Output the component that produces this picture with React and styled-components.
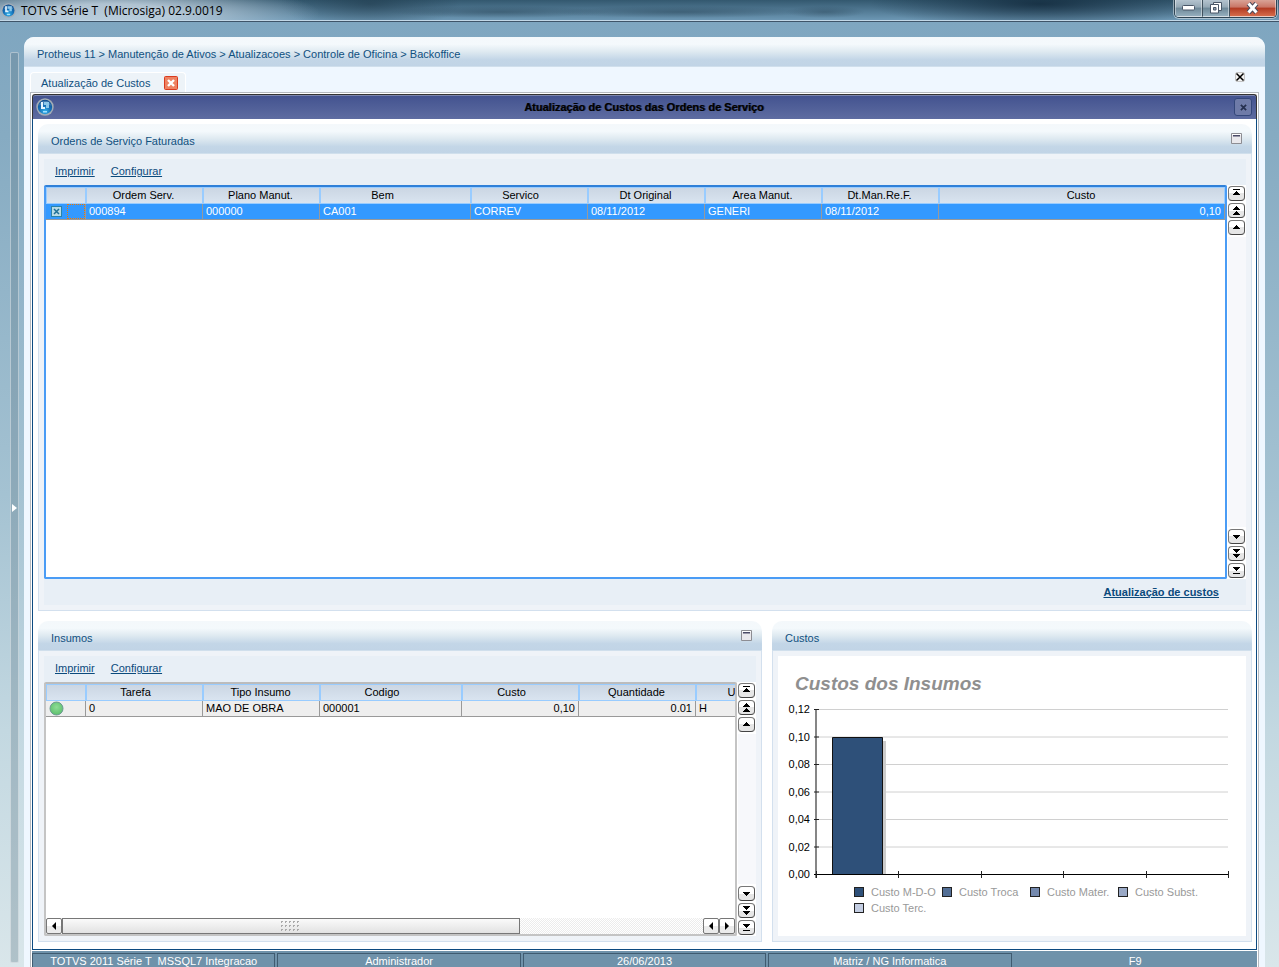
import React from "react";
import styled, { createGlobalStyle, css } from "styled-components";

const GlobalStyle = createGlobalStyle`
  *, *::before, *::after { box-sizing: border-box; }
  body {
    margin: 0;
    font: 11px/14px "Liberation Sans", Arial, sans-serif;
    color: #000;
    background: #d5e3ea;
  }
  button { font: inherit; padding: 0; margin: 0; }
`;

const Page = styled.div`
  min-height: 100vh;
  display: flex;
  flex-direction: column;
`;

/* ---------- operating system title bar ---------- */

const SystemBar = styled.header`
  height: 22px;
  flex: none;
  display: flex;
  align-items: flex-start;
  padding: 0 2px 0 1px;
  border-bottom: 1px solid #3f5468;
  box-shadow: inset 0 -1px 0 #c3d7e6;
  background:
    radial-gradient(ellipse 210px 30px at 110px 13px, rgba(204, 218, 230, 0.8) 30%, rgba(204, 218, 230, 0) 100%),
    radial-gradient(ellipse 110px 6px at 500px 12px, rgba(36, 62, 80, 0.45), transparent),
    radial-gradient(ellipse 130px 6px at 680px 12px, rgba(36, 62, 80, 0.45), transparent),
    radial-gradient(ellipse 40px 6px at 825px 12px, rgba(36, 62, 80, 0.4), transparent),
    radial-gradient(ellipse 90px 26px at 370px 4px, rgba(24, 48, 64, 0.5), transparent),
    radial-gradient(ellipse 170px 24px at 1040px 4px, rgba(12, 34, 52, 0.75), transparent),
    linear-gradient(#33586f, #6f9ab7);
`;

const SystemTitle = styled.h1`
  flex: 1;
  margin: 0 0 0 4px;
  font: 12px/21px "Open Sans", "Noto Sans", sans-serif;
  white-space: pre;
  color: #000;
`;

const WindowButtons = styled.div`
  display: flex;
  height: 18px;
  border: 1px solid #2f4453;
  border-top: 0;
  border-radius: 0 0 5px 5px;
  overflow: hidden;
  box-shadow: 0 0 0 1px rgba(255, 255, 255, 0.45);
`;

const WindowButton = styled.button`
  width: ${(p) => (p.$danger ? 47 : 27)}px;
  height: 17px;
  display: grid;
  place-items: center;
  border: 1px solid rgba(255, 255, 255, 0.45);
  border-top: 0;
  background: ${(p) =>
    p.$danger
      ? "linear-gradient(#d9a396 0, #c97565 45%, #b13a22 50%, #d56b4a 100%)"
      : "linear-gradient(#b4c3ce 0, #94a8b5 45%, #6d8797 50%, #94aebd 100%)"};
  & + & { border-left: 1px solid #40515e; }
`;

/* ---------- application shell ---------- */

const Workspace = styled.div`
  flex: 1;
  display: flex;
  gap: 5px;
  padding: 15px 14px 0 10px;
  background: linear-gradient(#7fa6c0 0, #86abc2 12%, #a4c2d2 50%, #c3d8e1 75%, #d9e6ea 100%);
`;

const Rail = styled.button`
  width: 9px;
  flex: none;
  margin: 15px 0 4px;
  display: grid;
  place-items: center;
  border: 1px solid rgba(255, 255, 255, 0.4);
  border-radius: 2px;
  background: rgba(100, 125, 140, 0.35);
`;

const Shell = styled.main`
  flex: 1;
  min-width: 0;
  display: flex;
  flex-direction: column;
  border-radius: 10px 10px 0 0;
  overflow: hidden;
  background: #eff7ff;
`;

const barGradient = css`
  background: linear-gradient(#f4f8fb 0, #f4f9fc 25%, #dfeaf1 50%, #c3d6e7 78%, #c1d4e6 100%);
  border-bottom: 1px solid #d0dfec;
`;

const Breadcrumb = styled.nav`
  height: 30px;
  flex: none;
  padding: 10px 13px 0;
  color: #10507f;
  white-space: nowrap;
  ${barGradient}
`;

const TabStrip = styled.div`
  height: 25px;
  flex: none;
  display: flex;
  justify-content: space-between;
  align-items: flex-start;
  padding: 5px 20px 0 6px;
`;

const Tab = styled.div`
  height: 21px;
  display: flex;
  align-items: center;
  gap: 14px;
  padding: 0 7px 0 10px;
  border: 1px solid #fff;
  border-bottom: 0;
  border-radius: 4px 4px 0 0;
  background: #edf3f8;
  color: #10507f;
`;

const IconButton = styled.button`
  display: grid;
  place-items: center;
  border: 0;
  background: none;
`;

const Frame = styled.div`
  flex: 1;
  display: flex;
  flex-direction: column;
  margin: 0 6px;
  padding: 1px 1px 0;
  border: 1px solid #b4b9bf;
  border-bottom: 0;
  background: #fff;
`;

const DialogBar = styled.header`
  height: 25px;
  flex: none;
  display: grid;
  grid-template-columns: 24px 1fr 24px;
  align-items: center;
  padding: 0 4px 0 3px;
  border: 1px solid #333;
  border-bottom: 0;
  border-radius: 3px 3px 0 0;
  box-shadow: inset 0 1px 0 #7c86ad;
  background: linear-gradient(#42528f, #5e6ca1);
`;

const DialogTitle = styled.h2`
  margin: 0;
  font-size: 11px;
  line-height: 14px;
  font-weight: bold;
  text-align: center;
  text-shadow: 1px 0 0 rgba(0, 0, 0, 0.55);
`;

const DialogClose = styled.button`
  width: 18px;
  height: 18px;
  display: grid;
  place-items: center;
  justify-self: end;
  border: 1px solid #34477a;
  border-radius: 3px;
  background: #6f7ba8;
`;

const DialogBody = styled.div`
  flex: 1;
  display: grid;
  grid-template-rows: 487fr 321fr;
  gap: 10px;
  padding: 5px 4px 7px 5px;
  border: 1px solid #0d4a80;
  border-top: 0;
`;

const LowerRow = styled.div`
  display: grid;
  grid-template-columns: minmax(0, 181fr) minmax(0, 120fr);
  gap: 10px;
`;

/* ---------- panels ---------- */

const PanelBox = styled.section`
  min-width: 0;
  display: flex;
  flex-direction: column;
`;

const PanelHead = styled.header`
  height: 30px;
  flex: none;
  display: flex;
  justify-content: space-between;
  align-items: center;
  padding: 0 10px 0 13px;
  border-radius: 10px 10px 0 0;
  color: #10507f;
  ${barGradient}
`;

const PanelTitle = styled.h3`
  margin: 0;
  padding-top: 4px;
  font-size: 11px;
  line-height: 14px;
  font-weight: normal;
`;

const PanelBody = styled.div`
  flex: 1;
  display: flex;
  flex-direction: column;
  padding: 5px;
  border: 1px solid #d3e0ee;
  border-top: 0;
  background: #eff3f8;
`;

const Toolbar = styled.div`
  height: 26px;
  flex: none;
  display: flex;
  align-items: center;
  justify-content: ${(p) => (p.$end ? "flex-end" : "flex-start")};
  gap: 16px;
  padding: 0 27px ${(p) => (p.$end ? 0 : 2)}px 11px;
  background: #e8eff6;
`;

const ActionLink = styled.a`
  color: #0b4a7c;
  text-decoration: underline;
  font-weight: ${(p) => (p.$strong ? "bold" : "normal")};
`;

/* ---------- data grid ---------- */

const GridArea = styled.div`
  flex: 1;
  display: flex;
  gap: 1px;
  background: #fff;
`;

const GridBox = styled.div`
  flex: 1;
  min-width: 0;
  display: flex;
  flex-direction: column;
  justify-content: space-between;
  overflow: hidden;
  border: ${(p) => (p.$active ? "2px solid #4a9cf5" : "2px solid #c4c4c4")};
  border-top-color: ${(p) => (p.$active ? "#2f80d8" : "#bcbcbc")};
  border-radius: 2px;
  background: #fff;
`;

const Table = styled.table`
  width: ${(p) => (p.$wide ? "766px" : "100%")};
  table-layout: fixed;
  border-collapse: separate;
  border-spacing: 0;
`;

const HeadCell = styled.th`
  height: 17px;
  padding: 0 ${(p) => p.$reserve || 2}px 0 0;
  border: 1px solid #99ccff;
  font-weight: normal;
  line-height: 14px;
  vertical-align: top;
  white-space: nowrap;
  overflow: hidden;
  background: linear-gradient(#cbd6e3, #d9e4f0);
`;

const Cell = styled.td`
  height: 16px;
  padding: 0 3px;
  border-right: 1px solid #999;
  border-bottom: 1px solid #999;
  line-height: 14px;
  vertical-align: top;
  white-space: nowrap;
  text-align: ${(p) => (p.$right ? "right" : "left")};
  color: ${(p) => (p.$active ? "#fff" : "#000")};
  background: ${(p) => (p.$active ? "#3399ff" : "#eee")};
`;

const MarkerCell = styled(Cell)`
  padding: 0 0 0 ${(p) => (p.$active ? 5 : 3)}px;
`;

const Marker = styled.div`
  display: flex;
  align-items: center;
  justify-content: space-between;
`;

const CheckLabel = styled.label`
  display: grid;
  width: 11px;
  height: 11px;
  & > * { grid-area: 1 / 1; }
`;

const Check = styled.input`
  appearance: none;
  margin: 0;
  width: 11px;
  height: 11px;
  border: 1px solid #2a83a8;
  background: #b9dbe6;
`;

const FocusCell = styled.span`
  width: 18px;
  height: 15px;
  border: 1px dotted #f07800;
`;

const ScrollColumn = styled.div`
  width: 18px;
  flex: none;
  display: flex;
  flex-direction: column;
  justify-content: space-between;
  padding: 1px 1px 1px 0;
  background: linear-gradient(#fff 52px, #f7f8fb 52px, #f7f8fb calc(100% - 52px), #fff calc(100% - 52px));
`;

const ScrollGroup = styled.div`
  display: flex;
  flex-direction: column;
  gap: 2px;
`;

const ScrollButton = styled.button`
  width: 17px;
  height: 15px;
  display: grid;
  place-items: center;
  border: 1px solid #777;
  border-bottom-color: #444;
  border-right-color: #555;
  border-radius: 4px;
  background: linear-gradient(#fff 50%, #e6e6e6 50%);
`;

const HScroll = styled.div`
  height: 16px;
  display: flex;
  background: repeating-conic-gradient(#ececec 0 25%, #fff 0 50%) 0 0 / 2px 2px;
`;

const HButton = styled.button`
  width: 16px;
  flex: none;
  display: grid;
  place-items: center;
  border: 1px solid #777;
  border-radius: 2px;
  background: linear-gradient(#fff 50%, #ebebeb 50%);
`;

const HThumb = styled.div`
  flex: 457;
  display: grid;
  place-items: center;
  border: 1px solid #777;
  background: linear-gradient(#fafafa, #e2e2e2);
`;

const HTrack = styled.div`
  flex: 184;
`;

/* ---------- chart ---------- */

const ChartCard = styled.figure`
  flex: 1;
  margin: 0;
  padding: 15px 10px 0;
  background: #fff;
`;

const ChartTitle = styled.figcaption`
  padding-left: 7px;
  font: italic bold 19px/26px "Liberation Sans", Arial, sans-serif;
  color: #8f8f8f;
`;

const Plot = styled.svg`
  display: block;
  width: 100%;
  margin-top: 6px;
  font: 11px "Liberation Sans", Arial, sans-serif;
`;

const Legend = styled.ul`
  display: grid;
  grid-template-columns: repeat(4, 88px);
  margin: 0;
  padding: 3px 0 0 66px;
  list-style: none;
  color: #999;
`;

const LegendItem = styled.li`
  display: flex;
  align-items: center;
  gap: 7px;
  height: 16px;
  white-space: nowrap;
  &::before {
    content: "";
    width: 10px;
    height: 10px;
    flex: none;
    border: 1px solid #222;
    background: ${(p) => p.$color};
  }
`;

/* ---------- status bar ---------- */

const StatusBar = styled.footer`
  height: 17px;
  flex: none;
  display: grid;
  grid-template-columns: repeat(5, 1fr);
  gap: 2px;
  padding-top: 2px;
  border-top: 1px solid #fff;
  background: #6f92aa;
`;

const StatusCell = styled.span`
  padding-top: ${(p) => (p.$plain ? 1 : 0)}px;
  border: ${(p) => (p.$plain ? "0" : "1px solid #3f5b70")};
  border-bottom: 0;
  line-height: 14px;
  text-align: center;
  white-space: pre;
  color: #fff;
`;

/* ---------- icons ---------- */

const Orb = ({ size }) => (
  <svg width={size} height={size} viewBox="0 0 18 18" aria-hidden="true">
    <defs>
      <radialGradient id={`orb${size}`} cx="50%" cy="80%" r="80%">
        <stop offset="0" stopColor="#35b3ea" />
        <stop offset="0.5" stopColor="#1570b8" />
        <stop offset="1" stopColor="#0b4a8c" />
      </radialGradient>
    </defs>
    <circle cx="9" cy="9" r="8.7" fill="#a3adb6" />
    <circle cx="9" cy="9" r="7.2" fill={`url(#orb${size})`} />
    <path d="M3 7.500a6.200 6.200 0 0 1 12 0q-6-2-12 0z" fill="#fff" opacity="0.2" />
    <path d="M5 4h2v5h2v2H5z" fill="#e4f5ff" />
    <path d="M8 4h5v6h-3V7H8z" fill="#8cc8ea" />
    <path d="M7 13h4v1.500H7z" fill="#9fe0ff" />
  </svg>
);

const Cross = ({ size = 8, color = "#000", width = 2 }) => (
  <svg width={size} height={size} viewBox="0 0 8 8" aria-hidden="true">
    <path d="M1 1l6 6M7 1l-6 6" stroke={color} strokeWidth={width} />
  </svg>
);

const TabClose = () => (
  <svg width="14" height="14" viewBox="0 0 14 14" aria-hidden="true">
    <rect x="0.5" y="0.5" width="13" height="13" rx="1" fill="#ee8262" stroke="#d93b1f" />
    <path d="M4 4l6 6M10 4l-6 6" stroke="#fff" strokeWidth="2.4" />
  </svg>
);

const StripClose = () => (
  <svg width="10" height="10" viewBox="0 0 10 10" aria-hidden="true">
    <rect x="0.5" y="0.5" width="9" height="9" rx="1.5" fill="#f2f2f2" stroke="#c4c4c4" />
    <path d="M1.5 1.5l7 7M8.5 1.5l-7 7" stroke="#000" strokeWidth="1.5" />
  </svg>
);

const CollapseIcon = () => (
  <svg width="11" height="11" viewBox="0 0 11 11" aria-hidden="true">
    <path d="M.5.5h10v10H.5z" fill="#e9e8ec" stroke="#8d8d93" />
    <path d="M1 1h9v1H1z" fill="#fff" />
    <path d="M2 2h7v1.5H2z" fill="#4a4a66" />
  </svg>
);

const arrows = {
  first: "M2 0h7v1H2zM5 2h1v1h1v1h1v1h1v1H2V5h1V4h1V3h1z",
  pageUp: "M5 0h1v1h1v1h1v1h1v1H2V3h1V2h1V1h1zM5 5h1v1h1v1h1v1h1v1H2V8h1V7h1V6h1z",
  up: "M5 2h1v1h1v1h1v1h1v1H2V5h1V4h1V3h1z",
  down: "M2 3h7v1H8v1H7v1H6v1H5V6H4V5H3V4H2z",
  pageDown: "M2 0h7v1H8v1H7v1H6v1H5V3H4V2H3V1H2zM2 5h7v1H8v1H7v1H6v1H5V8H4V7H3V6H2z",
  last: "M2 1h7v1H8v1H7v1H6v1H5V4H4V3H3V2H2zM2 7h7v1H2z",
};

const ArrowIcon = ({ kind }) => (
  <svg width="11" height="9" viewBox="0 0 11 9" aria-hidden="true">
    <path d={arrows[kind]} />
  </svg>
);

const SideArrow = ({ left }) => (
  <svg width="6" height="8" viewBox="0 0 6 8" aria-hidden="true">
    <path d={left ? "M5 0v8L1 4z" : "M1 0v8l4-4z"} />
  </svg>
);

const Grip = () => (
  <svg width="19" height="11" viewBox="0 0 19 11" aria-hidden="true">
    {[0, 4, 8].map((y) =>
      [0, 4, 8, 12, 16].map((x) => (
        <path key={`${x}-${y}`} d={`M${x} ${y}h2v1h-1v1h-1z`} fill="#aaa" />
      ))
    )}
  </svg>
);

/* ---------- composed parts ---------- */

const scrollLabels = {
  first: "Primeiro",
  pageUp: "Página anterior",
  up: "Linha anterior",
  down: "Próxima linha",
  pageDown: "Próxima página",
  last: "Último",
};

const Scroller = () => (
  <ScrollColumn>
    {[["first", "pageUp", "up"], ["down", "pageDown", "last"]].map((group) => (
      <ScrollGroup key={group[0]}>
        {group.map((kind) => (
          <ScrollButton key={kind} type="button" aria-label={scrollLabels[kind]}>
            <ArrowIcon kind={kind} />
          </ScrollButton>
        ))}
      </ScrollGroup>
    ))}
  </ScrollColumn>
);

const Panel = ({ title, collapsible, children }) => (
  <PanelBox>
    <PanelHead>
      <PanelTitle>{title}</PanelTitle>
      {collapsible && (
        <IconButton type="button" aria-label={`Recolher ${title}`}>
          <CollapseIcon />
        </IconButton>
      )}
    </PanelHead>
    <PanelBody>{children}</PanelBody>
  </PanelBox>
);

const GridToolbar = () => (
  <Toolbar>
    <ActionLink href="#imprimir">Imprimir</ActionLink>
    <ActionLink href="#configurar">Configurar</ActionLink>
  </Toolbar>
);

const DataTable = ({ columns, row, active, wide, marker }) => (
  <Table $wide={wide}>
    <colgroup>
      <col width="40" />
      {columns.map((c) => (
        <col key={c.label} width={c.width} />
      ))}
    </colgroup>
    <thead>
      <tr>
        <HeadCell aria-label="Marca" />
        {columns.map((c) => (
          <HeadCell key={c.label} $reserve={c.reserve}>{c.label}</HeadCell>
        ))}
      </tr>
    </thead>
    <tbody>
      <tr>
        <MarkerCell $active={active}>{marker}</MarkerCell>
        {row.map((value, i) => (
          <Cell key={columns[i].label} $active={active} $right={columns[i].right}>{value}</Cell>
        ))}
      </tr>
    </tbody>
  </Table>
);

const orderColumns = [
  { label: "Ordem Serv.", width: 117 },
  { label: "Plano Manut.", width: 117 },
  { label: "Bem", width: 151, reserve: 26 },
  { label: "Servico", width: 117, reserve: 18 },
  { label: "Dt Original", width: 117 },
  { label: "Area Manut.", width: 117 },
  { label: "Dt.Man.Re.F.", width: 117 },
  { label: "Custo", right: true },
];
const orderRow = ["000894", "000000", "CA001", "CORREV", "08/11/2012", "GENERI", "08/11/2012", "0,10"];

const supplyColumns = [
  { label: "Tarefa", width: 117, reserve: 18 },
  { label: "Tipo Insumo", width: 117 },
  { label: "Codigo", width: 142, reserve: 18 },
  { label: "Custo", width: 117, right: true, reserve: 18 },
  { label: "Quantidade", width: 117, right: true },
  { label: "Unidade", width: 116, reserve: 12 },
];
const supplyRow = ["0", "MAO DE OBRA", "000001", "0,10", "0.01", "H"];

const ticks = ["0,12", "0,10", "0,08", "0,06", "0,04", "0,02", "0,00"];
const tickY = (i) => 6.5 + i * 27.5;
const axisX = [28, 110, 193, 275, 358, 440];

const legend = [
  ["Custo M-D-O", "#2e5079"],
  ["Custo Troca", "#536f96"],
  ["Custo Mater.", "#7489ae"],
  ["Custo Subst.", "#9aa9c6"],
  ["Custo Terc.", "#c3cde2"],
];

const Chart = () => (
  <ChartCard>
    <ChartTitle>Custos dos Insumos</ChartTitle>
    <Plot viewBox="0 0 448 178" role="img" aria-label="Custos dos Insumos">
      {ticks.slice(0, -1).map((t, i) => (
        <path key={t} d={`M28 ${tickY(i)}H440`} stroke="#d0d0d0" />
      ))}
      {ticks.map((t, i) => (
        <text key={t} x="22" y={Math.floor(tickY(i)) + 4} textAnchor="end">{t}</text>
      ))}
      <path d="M94 38h4v133h-4z" fill="#ccc" />
      <path d="M44.5 34.5h50v137h-50z" fill="#2e5079" stroke="#111" />
      <path d="M28 6v169" stroke="#444" strokeWidth="1.3" />
      {ticks.map((t, i) => (
        <path key={t} d={`M26 ${tickY(i)}h5`} stroke="#222" />
      ))}
      <path d="M26 171.5H440" stroke="#000" />
      {axisX.map((x) => (
        <path key={x} d={`M${x}.5 168v7`} stroke="#222" />
      ))}
    </Plot>
    <Legend>
      {legend.map(([label, color]) => (
        <LegendItem key={label} $color={color}>{label}</LegendItem>
      ))}
    </Legend>
  </ChartCard>
);

export default function App() {
  return (
    <Page>
      <GlobalStyle />
      <SystemBar>
        <svg width="16" height="21" viewBox="0 0 16 21" aria-hidden="true">
          <g transform="translate(0 3)"><Orb size={15} /></g>
        </svg>
        <SystemTitle>{"TOTVS Série T  (Microsiga) 02.9.0019"}</SystemTitle>
        <WindowButtons>
          <WindowButton type="button" aria-label="Minimizar">
            <svg width="13" height="6" viewBox="0 0 13 6"><rect x="0.5" y="0.5" width="12" height="4.5" rx="1" fill="#fff" stroke="#4a5768" /></svg>
          </WindowButton>
          <WindowButton type="button" aria-label="Restaurar">
            <svg width="12" height="12" viewBox="0 0 12 12">
              <path d="M3.5.5h8v8h-8z" fill="#fff" stroke="#4a5768" />
              <path d="M.5 2.5h8v8.5h-8z" fill="#fff" stroke="#4a5768" />
              <path d="M3.5 5.5h2.5v2.5H3.5z" fill="#8fa0ad" stroke="#4a5768" />
            </svg>
          </WindowButton>
          <WindowButton type="button" aria-label="Fechar" $danger>
            <svg width="13" height="12" viewBox="0 0 13 12">
              <path d="M2.5 1.5l8 9M10.5 1.5l-8 9" stroke="#4a4a5a" strokeWidth="5" />
              <path d="M2.5 1.5l8 9M10.5 1.5l-8 9" stroke="#fff" strokeWidth="3" />
            </svg>
          </WindowButton>
        </WindowButtons>
      </SystemBar>

      <Workspace>
        <Rail type="button" aria-label="Abrir menu">
          <svg width="5" height="8" viewBox="0 0 5 8" aria-hidden="true"><path d="M0 0v8l5-4z" fill="#fff" /></svg>
        </Rail>
        <Shell>
          <Breadcrumb>
            Protheus 11 &gt; Manutenção de Ativos &gt; Atualizacoes &gt; Controle de Oficina &gt; Backoffice
          </Breadcrumb>
          <TabStrip>
            <Tab>
              Atualização de Custos
              <IconButton type="button" aria-label="Fechar aba"><TabClose /></IconButton>
            </Tab>
            <IconButton type="button" aria-label="Fechar tudo"><StripClose /></IconButton>
          </TabStrip>
          <Frame>
            <DialogBar>
              <Orb size={18} />
              <DialogTitle>Atualização de Custos das Ordens de Serviço</DialogTitle>
              <DialogClose type="button" aria-label="Fechar janela"><Cross size={7} color="#26304f" /></DialogClose>
            </DialogBar>
            <DialogBody>
              <Panel title="Ordens de Serviço Faturadas" collapsible>
                <GridToolbar />
                <GridArea>
                  <GridBox $active>
                    <DataTable
                      active
                      columns={orderColumns}
                      row={orderRow}
                      marker={
                        <Marker>
                          <CheckLabel>
                            <Check type="checkbox" defaultChecked aria-label="Marcar ordem 000894" />
                            <svg width="11" height="11" viewBox="0 0 11 11" aria-hidden="true">
                              <path d="M3 3l5 5M8 3l-5 5" stroke="#1d6f96" strokeWidth="1.5" />
                            </svg>
                          </CheckLabel>
                          <FocusCell />
                        </Marker>
                      }
                    />
                  </GridBox>
                  <Scroller />
                </GridArea>
                <Toolbar $end>
                  <ActionLink href="#custos" $strong>Atualização de custos</ActionLink>
                </Toolbar>
              </Panel>

              <LowerRow>
                <Panel title="Insumos" collapsible>
                  <GridToolbar />
                  <GridArea>
                    <GridBox>
                      <DataTable
                        wide
                        columns={supplyColumns}
                        row={supplyRow}
                        marker={
                          <Marker>
                            <svg width="15" height="15" viewBox="0 0 15 15" role="img" aria-label="Ativo">
                              <defs>
                                <radialGradient id="lamp" cx="50%" cy="40%" r="60%">
                                  <stop offset="0" stopColor="#8fdc96" />
                                  <stop offset="1" stopColor="#5cc06c" />
                                </radialGradient>
                              </defs>
                              <circle cx="7.5" cy="7.5" r="6.5" fill="url(#lamp)" stroke="#6c9a92" />
                            </svg>
                          </Marker>
                        }
                      />
                      <HScroll>
                        <HButton type="button" aria-label="Rolar à esquerda"><SideArrow left /></HButton>
                        <HThumb><Grip /></HThumb>
                        <HTrack />
                        <HButton type="button" aria-label="Coluna anterior"><SideArrow left /></HButton>
                        <HButton type="button" aria-label="Próxima coluna"><SideArrow /></HButton>
                      </HScroll>
                    </GridBox>
                    <Scroller />
                  </GridArea>
                </Panel>
                <Panel title="Custos">
                  <Chart />
                </Panel>
              </LowerRow>
            </DialogBody>
            <StatusBar>
              <StatusCell>{"TOTVS 2011 Série T  MSSQL7 Integracao"}</StatusCell>
              <StatusCell>Administrador</StatusCell>
              <StatusCell>26/06/2013</StatusCell>
              <StatusCell>Matriz / NG Informatica</StatusCell>
              <StatusCell $plain>F9</StatusCell>
            </StatusBar>
          </Frame>
        </Shell>
      </Workspace>
    </Page>
  );
}
